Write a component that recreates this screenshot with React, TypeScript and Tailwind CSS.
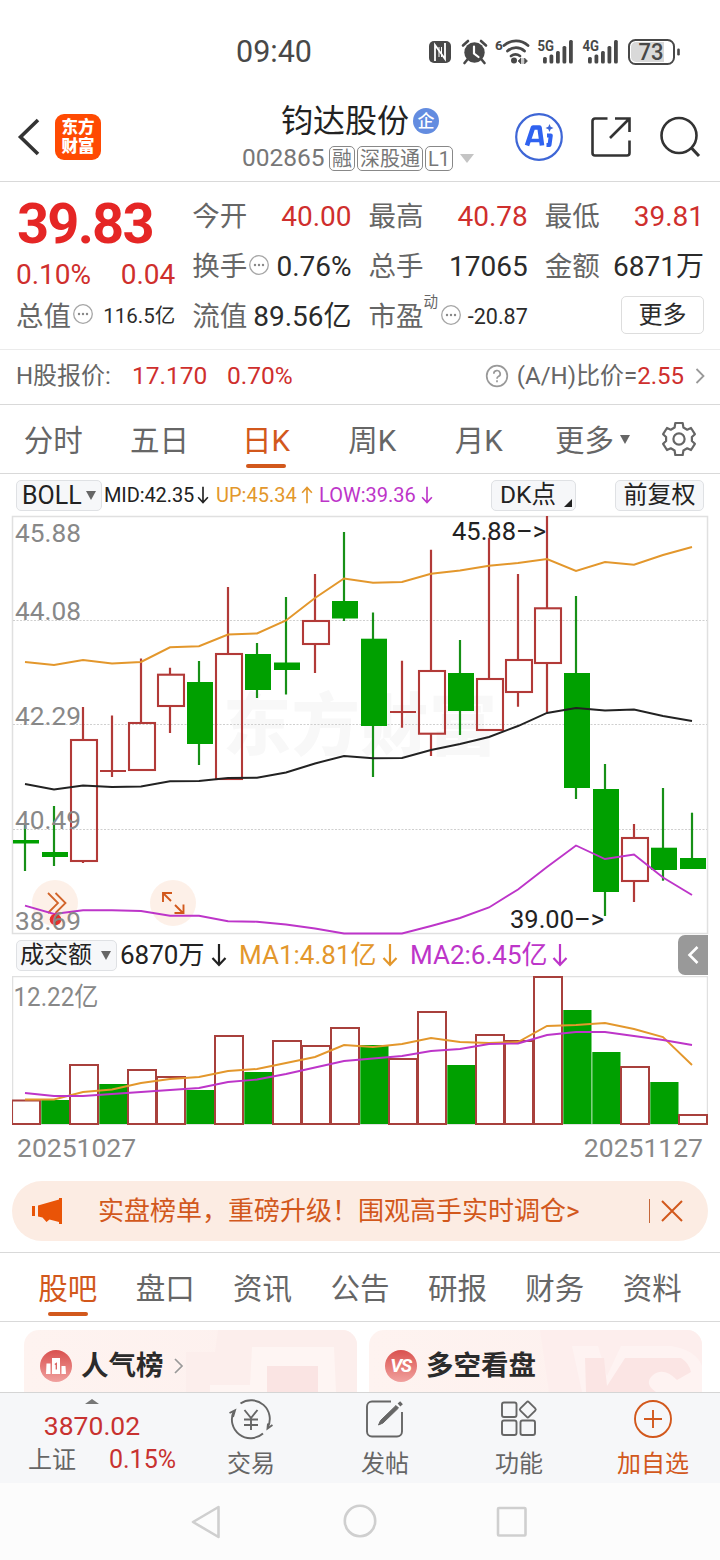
import React from 'react';

type Candle = { up: boolean; high: number; top: number; bottom: number; low: number };

const RED = '#b23a38';
const GREEN = '#00a000';

const candles: Candle[] = [
  { up: false, high: 825, top: 840, bottom: 843.5, low: 871 },
  { up: false, high: 806, top: 852, bottom: 857, low: 866 },
  { up: true, high: 707, top: 739, bottom: 862, low: 863 },
  { up: true, high: 715.5, top: 770, bottom: 772, low: 777 },
  { up: true, high: 658.5, top: 722, bottom: 771, low: 771 },
  { up: true, high: 667.7, top: 673.7, bottom: 707, low: 733 },
  { up: false, high: 661, top: 682, bottom: 744, low: 765 },
  { up: true, high: 587, top: 653, bottom: 780, low: 780 },
  { up: false, high: 643, top: 654, bottom: 690, low: 698 },
  { up: false, high: 597, top: 662.5, bottom: 670, low: 694.5 },
  { up: true, high: 574, top: 620, bottom: 645, low: 673 },
  { up: false, high: 532, top: 601, bottom: 618.5, low: 621 },
  { up: false, high: 612.5, top: 638.7, bottom: 726, low: 777 },
  { up: true, high: 660.7, top: 711, bottom: 713, low: 727.7 },
  { up: true, high: 549.7, top: 670, bottom: 734.7, low: 756 },
  { up: false, high: 640, top: 673, bottom: 711, low: 735 },
  { up: true, high: 537.7, top: 678, bottom: 731, low: 731 },
  { up: true, high: 574, top: 659, bottom: 693, low: 706.7 },
  { up: true, high: 516, top: 607.3, bottom: 664, low: 712.5 },
  { up: false, high: 596, top: 673, bottom: 788, low: 799 },
  { up: false, high: 764, top: 789, bottom: 892, low: 916 },
  { up: true, high: 824, top: 837, bottom: 882, low: 902 },
  { up: false, high: 788, top: 847.7, bottom: 870, low: 880.7 },
  { up: false, high: 812.7, top: 858, bottom: 869, low: 869 },
];

const volumeTops = [
  1099.5, 1100, 1064, 1084, 1069, 1076, 1090, 1035, 1072, 1040, 1045, 1027,
  1045, 1058, 1011, 1065, 1034, 1040, 976, 1010, 1052, 1066, 1082, 1114,
];
const volumeGreen = [1, 3, 6, 8, 12, 15, 19, 20, 22];

const upper = [
  662, 665, 660, 663.5, 662, 647.3, 646.3, 634.5, 633.5, 620.5, 598, 578.5,
  582.7, 582, 573.7, 570.5, 565.7, 563, 559, 571, 562, 564.7, 555, 547,
];
const middle = [
  784, 789.5, 785.5, 787, 786.5, 781.3, 781, 778, 777.7, 772.5, 763.5, 756,
  758.3, 758, 750, 744, 737, 726, 713, 708, 710.5, 709.5, 716, 721,
];
const lower = [
  905.7, 914, 910.3, 910.3, 911, 915.7, 915.7, 921.3, 921.7, 924.5, 928.5, 933.5,
  933.5, 933.5, 926, 918, 907.5, 889.5, 867, 845.5, 859, 854.5, 877.5, 895,
];
const ma1 = [
  1099.5, 1099.5, 1092, 1089.5, 1083, 1079, 1077, 1071, 1069, 1063, 1057, 1045,
  1047, 1044, 1038, 1042, 1043, 1042, 1026, 1025, 1023, 1029, 1037, 1065,
];
const ma2 = [
  1093, 1096, 1096, 1094, 1092, 1090, 1088, 1082, 1079.5, 1074, 1067.5, 1061,
  1058.5, 1056, 1051, 1049, 1044, 1043.5, 1035, 1032, 1032, 1036, 1040, 1045,
];

const xAt = (i: number) => 25 + i * 29;
const toPoints = (ys: number[]) => ys.map((y, i) => `${xAt(i)},${y}`).join(' ');

const priceLabels = [
  { text: '45.88', y: 542 },
  { text: '44.08', y: 620 },
  { text: '42.29', y: 725 },
  { text: '40.49', y: 829 },
  { text: '38.69', y: 930 },
];

const StatusIcons = () => (
  <svg width="254" height="32" viewBox="428 36 254 32" fill="#484848">
    <rect x="429" y="41" width="22" height="22" rx="5" />
    <path d="M435 61V45L445 59V43" fill="none" stroke="#fff" strokeWidth="1.8" />
    <path d="M439 47v10M441.500 47v10" stroke="#fff" strokeWidth="1" />
    <circle cx="474.500" cy="52.500" r="10.200" />
    <path d="M463 45.500l5-4.500M486 45.500l-5-4.500M467 60l-2.500 3M482 60l2.500 3" stroke="#484848" strokeWidth="2.600" strokeLinecap="round" />
    <path d="M474 46.500v7l4.500 3.500" fill="none" stroke="#fff" strokeWidth="2.200" strokeLinecap="round" />
    <text x="495" y="50" fontSize="13.500" fontWeight="700">6</text>
    <g fill="none" stroke="#484848" strokeWidth="2.800" strokeLinecap="round">
      <path d="M504 45.500a18 18 0 0 1 24 0" />
      <path d="M507.500 51a12.500 12.500 0 0 1 17 0" />
      <path d="M511 56a7.500 7.500 0 0 1 9 0" />
    </g>
    <circle cx="514" cy="60.500" r="3" />
    <path d="M518 61l3-3v6zM523 58v6M527.500 61l-3-3v6z" stroke="#484848" strokeWidth="0.600" />
    <text x="537.500" y="51" fontSize="15.500" fontWeight="700" textLength="16.500" lengthAdjust="spacingAndGlyphs">5G</text>
    <text x="582.500" y="51" fontSize="15.500" fontWeight="700" textLength="16.500" lengthAdjust="spacingAndGlyphs">4G</text>
    {[543, 588].map((x) => (
      <g key={x}>
        <rect x={x} y="57" width="3.800" height="6.500" rx="1.500" />
        <rect x={x + 6.500} y="54.500" width="3.800" height="9" rx="1.500" />
        <rect x={x + 13} y="51" width="3.800" height="12.500" rx="1.500" />
        <rect x={x + 19.500} y="46" width="3.800" height="17.500" rx="1.500" />
        <rect x={x + 26} y="40" width="3.800" height="23.500" rx="1.500" />
      </g>
    ))}
    <rect x="629" y="40" width="45" height="24" rx="6.500" fill="#fff" stroke="#484848" strokeWidth="2" />
    <path d="M636 42h28v20h-28a5 5 0 0 1-5-5V47a5 5 0 0 1 5-5z" fill="#d9d9d9" />
    <rect x="677.200" y="48.500" width="2.600" height="7" rx="1.200" />
    <text x="638.500" y="60" fontSize="23" fontWeight="500" textLength="25" lengthAdjust="spacingAndGlyphs">73</text>
  </svg>
);

const MoreDots = () => (
  <svg width="22" height="22" viewBox="0 0 22 22" className="mb-[5px] ml-px shrink-0">
    <circle cx="11" cy="11" r="9.300" fill="none" stroke="#a6a6a6" strokeWidth="1.300" />
    <circle cx="7" cy="11" r="1.200" fill="#888" />
    <circle cx="11" cy="11" r="1.200" fill="#888" />
    <circle cx="15" cy="11" r="1.200" fill="#888" />
  </svg>
);

const Arrow = ({ up, className }: { up?: boolean; className: string }) => (
  <svg viewBox="0 0 16 24" fill="none" stroke="currentColor" strokeWidth="2.200" className={className}>
    <path d={up ? 'M8 23V2M1.500 9L8 2l6.500 7' : 'M8 1v21M1.500 15L8 22l6.500-7'} />
  </svg>
);

const Header = () => (
  <header className="flex h-[82px] items-center border-b border-[#d9d9d9] pr-[19px] pb-[7px] pl-4">
    <svg width="26" height="40" viewBox="0 0 26 40" fill="none" stroke="#333" strokeWidth="3.600">
      <path d="M22 3L4.500 20L22 37" />
    </svg>
    <div className="ml-[13px] flex h-[46px] w-[46px] flex-col items-center justify-center rounded-[9px] bg-[#ff4a02] text-[16.500px] leading-[19px] font-black text-white">
      <span>东方</span>
      <span>财富</span>
    </div>
    <div className="mt-[5px] ml-[141px] flex w-[233px] flex-col">
      <div className="flex h-[38px] items-center pl-[39px]">
        <span className="text-[32px] leading-[38px] text-[#222]">钧达股份</span>
        <span className="ml-1 flex h-[26px] w-[26px] items-center justify-center rounded-full bg-[#638ce0] text-[17px] leading-none font-medium text-white">企</span>
      </div>
      <div className="flex h-[37px] items-center text-[#777]">
        <span className="w-[87px] text-[24.500px]">002865</span>
        <span className="flex h-[25px] w-[26px] items-center justify-center rounded-[5px] border border-[#888] text-[20px] leading-none">融</span>
        <span className="ml-[2px] flex h-[25px] w-[66px] items-center justify-center rounded-[5px] border border-[#888] text-[20px] leading-none">深股通</span>
        <span className="ml-[2px] flex h-[25px] w-[28px] items-center justify-center rounded-[5px] border border-[#888] text-[20px] leading-none">L1</span>
        <svg width="14" height="9" viewBox="0 0 14 9" className="ml-[7px]"><path d="M0 0h14L7 9z" fill="#c4c4c4" /></svg>
      </div>
    </div>
    <div className="ml-auto flex items-center">
      <svg width="48" height="48" viewBox="0 0 48 48">
        <circle cx="24" cy="24" r="22.800" fill="#fff" stroke="#3e66d6" strokeWidth="2.200" />
        <path d="M12 32.500l6-18h6.500l2.500 18" fill="none" stroke="#2f62f0" strokeWidth="4.600" strokeLinejoin="round" />
        <path d="M14 27.500h11" stroke="#2f62f0" strokeWidth="3.500" />
        <path d="M32 22.500h3.800L34.500 32h-3" fill="none" stroke="#2f62f0" strokeWidth="4" strokeLinejoin="round" />
        <path d="M34.500 11l1.200 2.800 2.800 1.200-2.800 1.200-1.200 2.800-1.200-2.800-2.800-1.200 2.800-1.200z" fill="#3e66d6" />
      </svg>
      <svg width="42" height="42" viewBox="0 0 42 42" fill="none" stroke="#333" strokeWidth="2.600" className="ml-[27px]">
        <path d="M17.500 2.500H5a2.500 2.500 0 0 0-2.500 2.500v32A2.500 2.500 0 0 0 5 39.500h32a2.500 2.500 0 0 0 2.500-2.500V24.500" />
        <path d="M25 2.500h14.500V16M39 3L20 22" />
      </svg>
      <svg width="42" height="42" viewBox="0 0 42 42" fill="none" stroke="#333" strokeWidth="2.600" className="ml-[27px]">
        <circle cx="20" cy="19.500" r="17.500" />
        <path d="M32.500 32l7.500 8" strokeWidth="3" />
      </svg>
    </div>
  </header>
);

const Field = ({ label, value, red, dots }: { label: string; value: string; red?: boolean; dots?: boolean }) => (
  <div className="flex h-[50px] items-center whitespace-nowrap">
    <span className="text-[27.500px] text-[#666]">{label}</span>
    {dots && <MoreDots />}
    <span className={`ml-auto text-[28px] ${red ? 'text-[#cf2f2d]' : 'text-[#2b2b2b]'}`}>{value}</span>
  </div>
);

const Quote = () => (
  <section className="grid h-[168px] grid-cols-4 gap-x-[17px] border-b border-[#ebebeb] pr-4 pl-4">
    <div className="flex flex-col pt-[16px]">
      <div className="flex h-[53px] items-center pl-px text-[56px] leading-[53px] font-bold tracking-[-1.800px] text-[#e52625]">39.83</div>
      <div className="flex h-[48px] items-center justify-between text-[28px] text-[#cf2f2d]">
        <span>0.10%</span>
        <span>0.04</span>
      </div>
      <div className="flex h-[35px] items-center whitespace-nowrap">
        <span className="text-[27.500px] text-[#666]">总值</span>
        <MoreDots />
        <span className="ml-auto text-[20.500px] text-[#2b2b2b]">116.5亿</span>
      </div>
    </div>
    <div className="flex flex-col pt-[10px]">
      <Field label="今开" value="40.00" red />
      <Field label="换手" value="0.76%" dots />
      <Field label="流值" value="89.56亿" />
    </div>
    <div className="flex flex-col pt-[10px]">
      <Field label="最高" value="40.78" red />
      <Field label="总手" value="17065" />
      <div className="flex h-[50px] items-center whitespace-nowrap">
        <span className="text-[27.500px] text-[#666]">市盈</span>
        <span className="h-[50px] w-[15px] text-[14.500px] leading-[22px] text-[#666]">动</span>
        <MoreDots />
        <span className="ml-auto text-[21.500px] text-[#2b2b2b]">-20.87</span>
      </div>
    </div>
    <div className="flex flex-col pt-[10px]">
      <Field label="最低" value="39.81" red />
      <Field label="金额" value="6871万" />
      <button className="mt-[4px] ml-auto h-[38px] w-[83px] rounded-[5px] border border-[#ddd] text-[24px] leading-[34px] text-[#2b2b2b]">更多</button>
    </div>
  </section>
);

const HShareRow = () => (
  <section className="flex h-[55px] items-center border-b border-[#d9d9d9] pb-[2px] pl-4 text-[24px] whitespace-nowrap">
    <span className="w-[116px] text-[#666]">H股报价:</span>
    <span className="w-[95px] text-[24.500px] text-[#cf2f2d]">17.170</span>
    <span className="text-[24.500px] text-[#cf2f2d]">0.70%</span>
    <svg width="24" height="24" viewBox="0 0 24 24" fill="none" stroke="#999" strokeWidth="1.700" className="ml-auto">
      <circle cx="12" cy="12" r="10.300" />
      <path d="M8.800 9.800a3.200 3.200 0 1 1 4.600 2.800c-1 .500-1.400 1-1.400 2.200M12 16.300v1.900" />
    </svg>
    <span className="ml-2 text-[#666]">(A/H)比价=</span>
    <span className="text-[#cf2f2d]">2.55</span>
    <svg width="10" height="18" viewBox="0 0 10 18" fill="none" stroke="#999" strokeWidth="1.800" className="mr-[15px] ml-[11px]">
      <path d="M1.500 2L8.500 9l-7 7" />
    </svg>
  </section>
);

const PeriodTabs = () => (
  <nav className="flex h-[69px] border-b border-[#d9d9d9] text-[29.500px] text-[#666]">
    {['分时', '五日', '日K', '周K', '月K'].map((t) => (
      <div key={t} className={`flex w-[106.400px] flex-col items-center ${t === '日K' ? 'text-[#d2581c]' : ''}`}>
        <span className="mt-[14px] h-[45px] leading-[45px]">{t}</span>
        {t === '日K' && <span className="h-1 w-10 rounded-full bg-[#d2581c]" />}
      </div>
    ))}
    <div className="flex w-[121px] justify-center">
      <span className="mt-[14px] leading-[45px]">更多</span>
      <svg width="10" height="9" viewBox="0 0 10 9" className="mt-[30px] ml-[6px]"><path d="M0 0h10L5 9z" fill="#666" /></svg>
    </div>
    <svg width="36" height="36" viewBox="0 0 36 36" fill="none" stroke="#666" strokeWidth="2.200" className="mt-[16px] ml-2">
      <path d="M14.300 2h7.400l.7 4.500 3.800 2.200L30 7l3.900 6.200-3 2.800v4l3 2.800L30 29l-3.800-1.700-3.800 2.200-.7 4.500h-7.400l-.7-4.500-3.800-2.200L6 29l-3.900-6.200 3-2.800v-4l-3-2.800L6 7l3.800 1.700 3.800-2.200z" strokeLinejoin="round" />
      <circle cx="18" cy="18" r="5.600" />
    </svg>
  </nav>
);

const IndicatorRow = () => (
  <div className="flex h-[42px] items-center pr-4 pl-4 text-[20px] whitespace-nowrap">
    <div className="flex h-[31px] w-[86px] items-center justify-between rounded-[5px] border border-[#dfe1e4] bg-[#f6f7f9] px-[5px] text-[25px] leading-none text-[#222]">
      BOLL
      <svg width="10" height="9" viewBox="0 0 10 9"><path d="M0 0h10L5 9z" fill="#666" /></svg>
    </div>
    <span className="ml-[2px] w-[93px] tracking-[-0.100px] text-[#222]">MID:42.35</span>
    <Arrow className="h-[18px] w-[12px] text-[#222]" />
    <span className="ml-[7px] w-[85px] text-[#e3972c]">UP:45.34</span>
    <Arrow up className="h-[18px] w-[12px] text-[#e3972c]" />
    <span className="ml-[6px] w-[102px] text-[#bd35c9]">LOW:39.36</span>
    <Arrow className="h-[18px] w-[12px] text-[#bd35c9]" />
    <div className="ml-auto flex h-[31px] w-[85px] items-center justify-between rounded-[5px] border border-[#dfe1e4] bg-[#f6f7f9] pr-[3px] pl-[8px] text-[24.500px] leading-none text-[#222]">
      DK点
      <svg width="8" height="8" viewBox="0 0 8 8" className="mt-[15px]"><path d="M8 0v8H0z" fill="#222" /></svg>
    </div>
    <div className="ml-[39px] flex h-[31px] w-[89px] items-center justify-center rounded-[5px] border border-[#dfe1e4] bg-[#f6f7f9] text-[24px] leading-none text-[#222]">前复权</div>
  </div>
);

const KLineChart = () => (
  <svg width="696" height="418" viewBox="12 516 696 418" className="mx-3 block overflow-visible">
    <rect x="12.500" y="516.500" width="695" height="417" fill="#fff" stroke="#e0e0e0" strokeWidth="1.500" />
    <text x="223" y="750" fontSize="68" fontWeight="900" fill="#f8f8f8" textLength="274">东方财富</text>
    {[620.500, 724.500, 829.500].map((y) => (
      <line key={y} x1="13" x2="707" y1={y} y2={y} stroke="#cfcfcf" strokeDasharray="2 1.500" />
    ))}
    {candles.map((c, i) => {
      const x = xAt(i);
      const flat = c.bottom - c.top <= 2;
      return (
        <g key={i}>
          {c.up ? (
            <>
              <path d={`M${x} ${c.high}V${c.top + 1}M${x} ${c.bottom - 1}V${c.low}`} stroke={RED} strokeWidth="2.200" />
              {flat ? (
                <rect x={x - 12} y={c.top} width="26" height="2" fill={RED} />
              ) : (
                <rect x={x - 12} y={c.top + 1} width="26" height={c.bottom - c.top - 2} fill="none" stroke={RED} strokeWidth="2.100" />
              )}
            </>
          ) : (
            <>
              <path d={`M${x} ${c.high}V${c.low}`} stroke="#179017" strokeWidth="2.200" />
              <rect x={x - 12} y={c.top} width="26" height={c.bottom - c.top} fill={GREEN} />
            </>
          )}
        </g>
      );
    })}
    <circle cx="55" cy="903" r="23" fill="#fdeee6" fillOpacity="0.900" />
    <path d="M48 893l10 10-10 10M55.500 893l10 10-10 10" fill="none" stroke="#d2642a" strokeWidth="1.800" />
    <circle cx="173" cy="903" r="23" fill="#fdeee6" fillOpacity="0.900" />
    <path d="M163 902v-9h9M163 893l8 8M175 905l8 8M183.500 904.500v8.500h-9" fill="none" stroke="#d2581c" strokeWidth="1.900" />
    <polyline points={toPoints(upper)} fill="none" stroke="#e3972c" strokeWidth="2" />
    <polyline points={toPoints(middle)} fill="none" stroke="#222" strokeWidth="1.900" />
    <polyline points={toPoints(lower)} fill="none" stroke="#bd35c9" strokeWidth="1.900" />
    <circle cx="55.500" cy="919.500" r="5.800" fill="#e5302c" />
    {priceLabels.map((l) => (
      <text key={l.text} x="15" y={l.y} fontSize="26.500" fill="#888" textLength="66" lengthAdjust="spacingAndGlyphs">{l.text}</text>
    ))}
    <text x="452" y="540" fontSize="26.500" fill="#222" textLength="94" lengthAdjust="spacingAndGlyphs">45.88–&gt;</text>
    <text x="510" y="928" fontSize="26.500" fill="#222" textLength="94" lengthAdjust="spacingAndGlyphs">39.00–&gt;</text>
  </svg>
);

const VolumeRow = () => (
  <div className="flex h-[42px] items-center pr-3 pl-4 text-[26px] whitespace-nowrap">
    <div className="flex h-[31px] w-[101px] items-center justify-between rounded-[5px] border border-[#dfe1e4] bg-[#f6f7f9] pr-[5px] pl-[3px] text-[24px] leading-none text-[#222]">
      成交额
      <svg width="10" height="9" viewBox="0 0 10 9"><path d="M0 0h10L5 9z" fill="#666" /></svg>
    </div>
    <span className="ml-[3px] w-[91px] text-[#222]">6870万</span>
    <Arrow className="h-[24px] w-[16px] text-[#222]" />
    <span className="ml-[12px] w-[143px] text-[#e3972c]">MA1:4.81亿</span>
    <Arrow className="h-[24px] w-[16px] text-[#e3972c]" />
    <span className="ml-[12px] w-[142px] text-[#bd35c9]">MA2:6.45亿</span>
    <Arrow className="h-[24px] w-[16px] text-[#bd35c9]" />
    <div className="ml-auto flex h-10 w-[30px] items-center justify-center rounded-l-[7px] bg-[#999]">
      <svg width="12" height="20" viewBox="0 0 12 20" fill="none" stroke="#fff" strokeWidth="2.600"><path d="M10.500 2L2.500 10l8 8" /></svg>
    </div>
  </div>
);

const VolumeChart = () => (
  <svg width="696" height="149" viewBox="12 976 696 149" className="mx-3 block">
    <rect x="12.500" y="976.500" width="695" height="148" fill="#fff" stroke="#e0e0e0" strokeWidth="1.500" />
    {volumeTops.map((top, i) => {
      const x = xAt(i) - 13.500;
      return volumeGreen.includes(i) ? (
        <rect key={i} x={x + 0.800} y={top} width="28.200" height={1124 - top} fill={GREEN} />
      ) : (
        <rect key={i} x={x + 0.500} y={top + 1} width="28" height={1123 - top} fill="none" stroke="#a8403c" strokeWidth="2" />
      );
    })}
    <polyline points={toPoints(ma1)} fill="none" stroke="#e3972c" strokeWidth="1.900" />
    <polyline points={toPoints(ma2)} fill="none" stroke="#bd35c9" strokeWidth="1.900" />
    <text x="13.500" y="1006" fontSize="26" fill="#888" textLength="85" lengthAdjust="spacingAndGlyphs">12.22亿</text>
  </svg>
);

const Banner = () => (
  <div className="mx-3 mt-[11px] flex h-[60px] shrink-0 items-center rounded-full bg-[#fcece3] pr-[24px] pl-[20px] text-[#d2581c]">
    <svg width="32" height="28" viewBox="0 0 32 28" fill="#e95407">
      <path d="M0 9h3v10H0zM6 8.500L27 2.500V1h3v26h-3v-2l-9.500-2.500-3 2.500-4-4.500L6 19.500z" />
    </svg>
    <span className="ml-[34px] text-[26px] whitespace-nowrap">实盘榜单，重磅升级！围观高手实时调仓&gt;</span>
    <span className="ml-auto h-[24px] w-px bg-[#c5673a]" />
    <svg width="24" height="24" viewBox="0 0 24 24" fill="none" stroke="#d2581c" strokeWidth="2" className="ml-[10px]">
      <path d="M2 2l20 20M22 2L2 22" />
    </svg>
  </div>
);

const InfoTabs = () => (
  <nav className="mt-[11px] flex h-[70px] shrink-0 border-y border-[#d9d9d9] px-[19px] text-[29.500px] text-[#666]">
    {['股吧', '盘口', '资讯', '公告', '研报', '财务', '资料'].map((t, i) => (
      <div key={t} className={`flex w-[97.500px] flex-col items-center ${i === 0 ? 'text-[#d2581c]' : ''}`}>
        <span className="mt-[14px] h-[45px] leading-[45px]">{t}</span>
        {i === 0 && <span className="h-1 w-10 rounded-full bg-[#d2581c]" />}
      </div>
    ))}
  </nav>
);

const Cards = () => (
  <section className="flex h-[70px] shrink-0 gap-3 overflow-hidden pt-2 pl-6">
    <div className="relative h-[100px] w-[333px] overflow-hidden rounded-[15px] bg-gradient-to-r from-[#fef3f0] to-[#fdf0ee]">
      <svg width="333" height="62" viewBox="0 0 333 62" className="absolute top-0 left-0">
        <path d="M194 0h139v62H162V22h29z" fill="#fceeec" />
        <path d="M228 17h82l2 45H186v-7h40z" fill="#fef5f3" />
        <path d="M243 36h51v26h-51z" fill="#fae4e3" />
      </svg>
      <div className="relative flex h-[71px] items-center pl-4">
        <svg width="32" height="32" viewBox="0 0 32 32">
          <defs><linearGradient id="rank" x1="0" y1="0" x2="0" y2="1"><stop stopColor="#d9504e" /><stop offset="1" stopColor="#f0a09e" /></linearGradient></defs>
          <circle cx="16" cy="16" r="16" fill="url(#rank)" />
          <path d="M6.500 13.500h4V24H6zM12 8h8v16h-8zM21.500 16h4l.5 8h-4.500z" fill="#fff" />
          <path d="M14.800 14.500l1.500-1v6" fill="none" stroke="#d9605e" strokeWidth="1.300" />
        </svg>
        <span className="ml-[9px] text-[27.500px] font-bold text-[#2b2b2b]">人气榜</span>
        <svg width="10" height="16" viewBox="0 0 10 16" fill="none" stroke="#999" strokeWidth="1.700" className="ml-[10px]"><path d="M1 1l7 7-7 7" /></svg>
      </div>
    </div>
    <div className="relative h-[100px] w-[333px] overflow-hidden rounded-[15px] bg-gradient-to-r from-[#fef3f0] to-[#fdf0ee]">
      <svg width="333" height="62" viewBox="0 0 333 62" className="absolute top-0 left-0">
        <path d="M171 0h162v62H180z" fill="#fdeeed" />
        <path d="M203 16h26l9 30 14-30h50q25 4 31 20v26H213z" fill="#fef3f2" />
        <path d="M216 28h19l3 28 18-28h56q8 5 10 14l-14 8q-14-14-25-4-8 8 4 16h-70z" fill="#fbe5e4" />
      </svg>
      <div className="relative flex h-[71px] items-center pl-4">
        <span className="flex h-8 w-8 items-center justify-center rounded-full bg-gradient-to-b from-[#d9504e] to-[#f0a09e] pr-px text-[19px] leading-none font-bold tracking-[-1.500px] text-white italic">VS</span>
        <span className="ml-[9px] text-[27.500px] font-bold text-[#2b2b2b]">多空看盘</span>
      </div>
    </div>
  </section>
);

const actions = [
  {
    label: '交易',
    icon: (
      <>
        <path d="M11.500 6.500A18.700 18.700 0 0 1 38.700 30.500M34 36.500A18.700 18.700 0 0 1 4.700 14.500" />
        <path d="M.5 16l5.500-2.700L4 20M43.500 28l-5 3.500.5-5" />
        <path d="M15.500 13l6.500 8 6.500-8M22 21v12M15 22.500h14M15 28h14" />
      </>
    ),
  },
  {
    label: '发帖',
    icon: (
      <>
        <path d="M28 4.500H9a5 5 0 0 0-5 5v25a5 5 0 0 0 5 5h25a5 5 0 0 0 5-5V15" />
        <path d="M15.500 28l2-4.500L33 8.500l2.500 2.500L20 26z" fill="currentColor" strokeWidth="1" />
        <path d="M36 8l2.500-2.300" strokeWidth="4" />
      </>
    ),
  },
  {
    label: '功能',
    icon: (
      <>
        <rect x="5" y="5.500" width="14.500" height="14.500" rx="2" />
        <rect x="5" y="23.500" width="14.500" height="14.500" rx="2" />
        <rect x="23.500" y="23.500" width="14.500" height="14.500" rx="2" />
        <rect x="24.800" y="6.500" width="12" height="12" rx="1.500" transform="rotate(45 30.800 12.500)" />
      </>
    ),
  },
  {
    label: '加自选',
    icon: (
      <>
        <circle cx="22" cy="22" r="18" />
        <path d="M22 13v18M13 22h18" />
      </>
    ),
  },
];

const BottomBar = () => (
  <footer className="flex h-[91px] shrink-0 border-t border-[#d5d5d5] bg-[#f6f7f9]">
    <div className="flex w-[184px] flex-col items-center">
      <svg width="14" height="5" viewBox="0 0 14 5" className="mt-[6px]"><path d="M0 5h14L7 0z" fill="#777" /></svg>
      <span className="mt-[6px] text-[26.500px] leading-[31px] text-[#c83230]">3870.02</span>
      <div className="mt-px flex w-full items-center justify-between pr-2 pl-[28px] text-[25px] leading-[36px]">
        <span className="text-[24px] text-[#666]">上证</span>
        <span className="text-[#c83230]">0.15%</span>
      </div>
    </div>
    {actions.map((a) => (
      <div key={a.label} className={`flex flex-1 flex-col items-center ${a.label === '加自选' ? 'text-[#d2581c]' : 'text-[#666]'}`}>
        <svg width="44" height="44" viewBox="0 0 44 44" fill="none" stroke="currentColor" strokeWidth="1.900" className="mt-1">{a.icon}</svg>
        <span className="mt-[6px] text-[24px] leading-[34px]">{a.label}</span>
      </div>
    ))}
  </footer>
);

const SystemNav = () => (
  <div className="flex h-[77px] shrink-0 items-center bg-[#fcfcfc] pl-[189px]">
    <svg width="340" height="36" viewBox="189 1504 340 36" fill="none" stroke="#cfcfcf" strokeWidth="2.600" strokeLinejoin="round">
      <path d="M218.500 1507v30L193 1522z" />
      <circle cx="360" cy="1521" r="15.200" />
      <rect x="498" y="1508" width="27.500" height="27.500" rx="1" />
    </svg>
  </div>
);

export default function App() {
  return (
    <div className="flex h-[1560px] w-[720px] flex-col overflow-hidden bg-white font-['Roboto','Noto_Sans_CJK_SC',sans-serif]">
      <div className="flex h-[100px] shrink-0 items-center pt-[4px] pr-[38px] pl-[236px]">
        <span className="text-[30.500px] text-[#484848]">09:40</span>
        <div className="ml-auto"><StatusIcons /></div>
      </div>
      <Header />
      <Quote />
      <HShareRow />
      <PeriodTabs />
      <IndicatorRow />
      <KLineChart />
      <VolumeRow />
      <VolumeChart />
      <div className="flex h-[45px] shrink-0 items-center justify-between pr-[17px] pl-[17px] text-[26.500px] text-[#888]">
        <span>20251027</span>
        <span>20251127</span>
      </div>
      <Banner />
      <InfoTabs />
      <Cards />
      <BottomBar />
      <SystemNav />
    </div>
  );
}
